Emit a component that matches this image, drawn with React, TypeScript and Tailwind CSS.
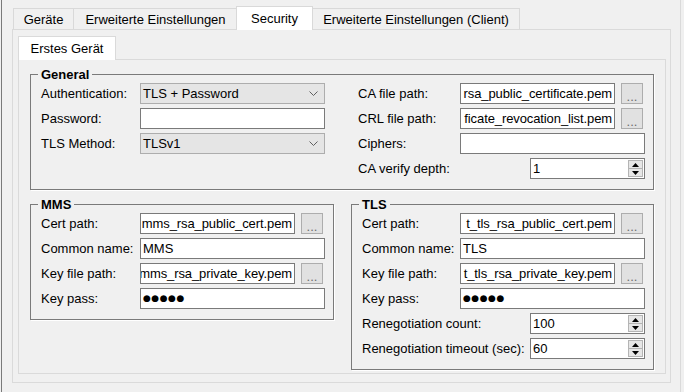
import type { ReactNode } from "react";

function Tab({ children, w, selected }: { children: ReactNode; w: string; selected?: boolean }) {
  if (selected) {
    return (
      <div
        className={`relative z-10 -mb-px -ml-[2px] flex h-[24px] items-center justify-center border border-b-0 border-[#d9d9d9] bg-white pb-[1px] ${w}`}
      >
        {children}
      </div>
    );
  }
  return (
    <div className={`-ml-px flex h-[21px] items-center justify-center border border-b-0 border-[#d9d9d9] bg-[#f0f0f0] first:ml-0 ${w}`}>
      {children}
    </div>
  );
}

function Label({ children, w }: { children: ReactNode; w: string }) {
  return <div className={`shrink-0 whitespace-nowrap ${w}`}>{children}</div>;
}

function TextBox({ value, w = "w-[185px]", dots }: { value?: string; w?: string; dots?: boolean }) {
  return (
    <div className={`flex h-[21px] items-center overflow-hidden whitespace-nowrap border border-[#7a7a7a] bg-white pl-[2px] ${w}`}>
      {dots ? (
        <span className="font-['DejaVu_Sans',sans-serif] text-[9px] tracking-[0.5px]">●●●●●</span>
      ) : (
        value
      )}
    </div>
  );
}

// path fields are scrolled to the end, so the start of the text gets clipped
function PathBox({ value }: { value: string }) {
  return (
    <div className="flex items-center">
      <div className="flex h-[21px] w-[155px] items-center justify-end overflow-hidden whitespace-nowrap border border-[#7a7a7a] bg-white pr-[2px] tracking-[-0.1px]">
        {value}
      </div>
      <button className="ml-[6px] flex h-[21px] w-[22px] items-end justify-center border border-[#adadad] bg-[#e1e1e1] leading-[13px] text-[#6d6d6d]">
        ...
      </button>
    </div>
  );
}

function Combo({ value }: { value: string }) {
  return (
    <div className="flex h-[21px] w-[185px] items-center justify-between border border-[#adadad] bg-[#e5e5e5] pl-[2px] pr-[6px]">
      <span>{value}</span>
      <svg width="9" height="5" viewBox="0 0 9 5">
        <polyline points="0.5,0.5 4.5,4.5 8.5,0.5" fill="none" stroke="#606060" strokeWidth="1" />
      </svg>
    </div>
  );
}

function Spin({ value }: { value: string }) {
  return (
    <div className="flex h-[21px] w-[115px] border border-[#7a7a7a] bg-white">
      <div className="flex flex-1 items-center pl-[2px]">{value}</div>
      <div className="my-px mr-px flex w-[15px] flex-col">
        <div className="flex flex-1 items-center justify-center border border-[#b4b4b4] bg-[#e6e6e6]">
          <svg width="7" height="4" viewBox="0 0 7 4">
            <polygon points="0,4 3.5,0 7,4" fill="#000" />
          </svg>
        </div>
        <div className="flex flex-1 items-center justify-center border border-t-0 border-[#b4b4b4] bg-[#e6e6e6]">
          <svg width="7" height="4" viewBox="0 0 7 4">
            <polygon points="0,0 7,0 3.5,4" fill="#000" />
          </svg>
        </div>
      </div>
    </div>
  );
}

function Group({ title, className, children }: { title: string; className: string; children: ReactNode }) {
  return (
    <fieldset className={`m-0 min-w-0 border border-[#7a7a7a] p-0 shadow-[1px_1px_0_#ffffff] ${className}`}>
      <legend className="ml-[7px] px-[3px] font-bold leading-[15px]">{title}</legend>
      <div className="mt-px pl-[10px]">{children}</div>
    </fieldset>
  );
}

function Row({ children }: { children: ReactNode }) {
  return <div className="flex h-[21px] items-center">{children}</div>;
}

export default function App() {
  return (
    <div className="h-[392px] w-[684px] overflow-hidden bg-[#f0f0f0] pl-px font-['Liberation_Sans',Arial,sans-serif] text-[13px] leading-[15px] text-black">
      <div className="h-full w-[680px] border-l border-r border-l-[#7a7a7a] border-r-[#dadada] pl-[10px] pt-[6px]">
        <div className="flex h-[23px] items-end pl-px">
          <Tab w="w-[61px]">Geräte</Tab>
          <Tab w="w-[165px]">Erweiterte Einstellungen</Tab>
          <Tab selected w="w-[77px]">
            Security
          </Tab>
          <div className="-ml-px flex">
            <Tab w="w-[208px]">Erweiterte Einstellungen (Client)</Tab>
          </div>
        </div>

        <div className="h-[354px] w-[659px] border border-[#dadada] pl-[5px] pt-[6px]">
          <div className="flex h-[23px] items-end">
            <div className="relative z-10 -mb-px flex h-[24px] w-[98px] items-center justify-center border border-b-0 border-[#dadada] bg-white">
              Erstes Gerät
            </div>
          </div>

          <div className="h-[315px] w-[648px] border border-[#dadada] pl-[11px] pt-[7px]">
            <Group title="General" className="h-[123px] w-[624px]">
              <div className="flex">
                <div className="flex flex-col gap-[4px]">
                  <Row>
                    <Label w="w-[99px]">Authentication:</Label>
                    <Combo value="TLS + Password" />
                  </Row>
                  <Row>
                    <Label w="w-[99px]">Password:</Label>
                    <TextBox />
                  </Row>
                  <Row>
                    <Label w="w-[99px]">TLS Method:</Label>
                    <Combo value="TLSv1" />
                  </Row>
                </div>
                <div className="ml-[33px] flex w-[287px] flex-col gap-[4px]">
                  <Row>
                    <Label w="w-[102px]">CA file path:</Label>
                    <PathBox value="rsa_public_certificate.pem" />
                  </Row>
                  <Row>
                    <Label w="w-[102px]">CRL file path:</Label>
                    <PathBox value="ficate_revocation_list.pem" />
                  </Row>
                  <Row>
                    <Label w="w-[102px]">Ciphers:</Label>
                    <TextBox />
                  </Row>
                  <div className="flex h-[21px] items-center justify-between">
                    <span>CA verify depth:</span>
                    <Spin value="1" />
                  </div>
                </div>
              </div>
            </Group>

            <div className="mt-[7px] flex items-start gap-[17px]">
              <Group title="MMS" className="h-[123px] w-[304px]">
                <div className="flex flex-col gap-[4px]">
                  <Row>
                    <Label w="w-[99px]">Cert path:</Label>
                    <PathBox value="mms_rsa_public_cert.pem" />
                  </Row>
                  <Row>
                    <Label w="w-[99px]">Common name:</Label>
                    <TextBox value="MMS" />
                  </Row>
                  <Row>
                    <Label w="w-[99px]">Key file path:</Label>
                    <PathBox value="mms_rsa_private_key.pem" />
                  </Row>
                  <Row>
                    <Label w="w-[99px]">Key pass:</Label>
                    <TextBox dots />
                  </Row>
                </div>
              </Group>

              <Group title="TLS" className="h-[173px] w-[303px]">
                <div className="flex w-[283px] flex-col gap-[4px]">
                  <Row>
                    <Label w="w-[98px]">Cert path:</Label>
                    <PathBox value="t_tls_rsa_public_cert.pem" />
                  </Row>
                  <Row>
                    <Label w="w-[98px]">Common name:</Label>
                    <TextBox value="TLS" />
                  </Row>
                  <Row>
                    <Label w="w-[98px]">Key file path:</Label>
                    <PathBox value="t_tls_rsa_private_key.pem" />
                  </Row>
                  <Row>
                    <Label w="w-[98px]">Key pass:</Label>
                    <TextBox dots />
                  </Row>
                  <div className="flex h-[21px] items-center justify-between">
                    <span>Renegotiation count:</span>
                    <Spin value="100" />
                  </div>
                  <div className="flex h-[21px] items-center justify-between">
                    <span>Renegotiation timeout (sec):</span>
                    <Spin value="60" />
                  </div>
                </div>
              </Group>
            </div>
          </div>
        </div>
      </div>
    </div>
  );
}
